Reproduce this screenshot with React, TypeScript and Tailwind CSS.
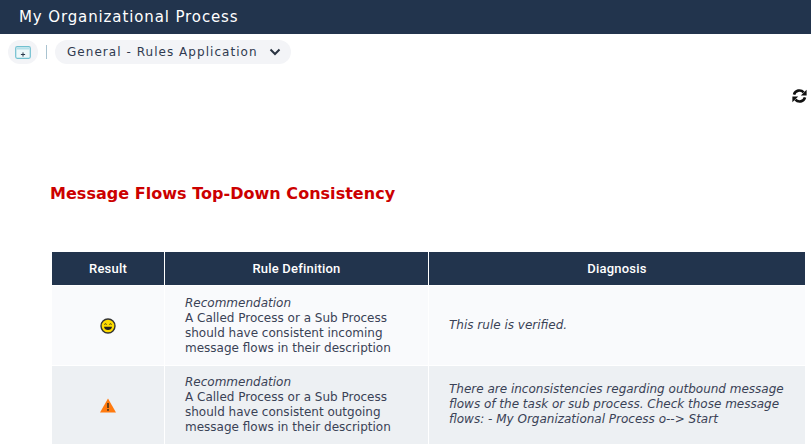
import React from "react";

const F = "font-['DejaVu_Sans',sans-serif]";

function Smile() {
  return (
    <svg width="16" height="16" viewBox="0 0 16 16">
      <circle cx="8" cy="8" r="7" fill="#ffdc00" stroke="#333" strokeWidth="1.4" />
      <path d="M4.4 6.4 Q5.5 5.2 6.6 6.4 M9.4 6.4 Q10.5 5.2 11.6 6.4" fill="none" stroke="#222" strokeWidth="1" />
      <path d="M4 8.8 H12 Q11.4 12 8 12 Q4.6 12 4 8.8 Z" fill="#222" />
    </svg>
  );
}

function Warn() {
  return (
    <svg width="16" height="15" viewBox="0 0 16 15">
      <path d="M8 0.5 L16 14.5 H0 Z" fill="#ff7a0f" />
      <rect x="7.1" y="5" width="1.8" height="5" fill="#5a3a1a" />
      <rect x="7.1" y="11" width="1.8" height="1.8" fill="#5a3a1a" />
    </svg>
  );
}

function Row({ icon, term, rule, diag, bg, h }: { icon: React.ReactNode; term: string; rule: string[]; diag: string[]; bg: string; h: string }) {
  return (
    <>
      <div className={`${bg} ${h} flex items-center justify-center`}>{icon}</div>
      <div className={`${bg} ${h} flex flex-col justify-center pl-5 text-[12px] leading-[15px] text-[#3a4256]`}>
        <i>{term}</i>
        {rule.map((l) => (
          <span key={l} className="whitespace-nowrap">{l}</span>
        ))}
      </div>
      <div className={`${bg} ${h} flex flex-col justify-center pl-5 pb-[1px] text-[12px] leading-[15px] italic text-[#3a4256]`}>
        {diag.map((l) => (
          <span key={l} className="whitespace-nowrap">{l}</span>
        ))}
      </div>
    </>
  );
}

export default function App() {
  return (
    <div className={`${F} w-[811px] h-[448px] overflow-hidden bg-white flex flex-col`}>
      <header className="h-[34px] bg-[#22344d] flex items-center pl-[19px] text-[15px] tracking-[0.88px] text-white">
        My Organizational Process
      </header>
      <div className="h-[36px] flex items-center pl-2">
        <div className="w-[30px] h-[24px] rounded-full bg-[#f3f4f7] flex items-center justify-center">
          <svg width="16" height="13" viewBox="0 0 16 13">
            <rect x="0.7" y="0.7" width="14.6" height="11.6" rx="1.5" fill="#eef8fa" stroke="#72c0d0" strokeWidth="1.2" />
            <rect x="1.5" y="1.5" width="13" height="2" fill="#b5e0e9" />
            <path d="M8 6.4 V10.6 M5.9 8.5 H10.1" stroke="#2b3a4d" strokeWidth="1" />
          </svg>
        </div>
        <div className="w-px h-[14px] bg-[#a9c3d0] ml-[8px]" />
        <div className="ml-[8px] w-[236px] h-[24px] rounded-full bg-[#f3f4f7] flex items-center pl-[12px] text-[12px] tracking-[1.04px] text-[#2f3a4f]">
          <span className="whitespace-nowrap">General - Rules Application</span>
          <svg className="ml-[11px]" width="12" height="8" viewBox="0 0 12 8">
            <path d="M1.5 1.5 L6 6 L10.5 1.5" fill="none" stroke="#2a3442" strokeWidth="2" />
          </svg>
        </div>
      </div>
      <div className="h-[52px] flex justify-end items-start pr-[4px] pt-[18px]">
        <svg width="15" height="16" viewBox="0 0 15 16">
          <path d="M2 6.6 A5.6 5.6 0 0 1 11.6 4.4" fill="none" stroke="#111" strokeWidth="2.6" />
          <path d="M14.6 1.8 V7.6 H8.8 Z" fill="#111" />
          <path d="M13 9.4 A5.6 5.6 0 0 1 3.4 11.6" fill="none" stroke="#111" strokeWidth="2.6" />
          <path d="M0.4 14.2 V8.4 H6.2 Z" fill="#111" />
        </svg>
      </div>
      <h1 className="ml-[50px] mt-[62px] text-[16px] leading-[20px] font-bold text-[#cc0000] whitespace-nowrap tracking-[0.03px]">
        Message Flows Top-Down Consistency
      </h1>
      <div className="ml-[52px] mt-[48px] w-[753px] grid grid-cols-[112px_263px_376px] gap-[1px] bg-white">
        {["Result", "Rule Definition", "Diagnosis"].map((t) => (
          <div key={t} className="h-[33px] bg-[#22344d] flex items-center justify-center text-[13px] font-['Roboto',sans-serif] font-medium text-white tracking-[0.2px]">
            {t}
          </div>
        ))}
        <Row
          icon={<Smile />}
          term="Recommendation"
          rule={["A Called Process or a Sub Process", "should have consistent incoming", "message flows in their description"]}
          diag={["This rule is verified."]}
          bg="bg-[#f9fafc]"
          h="h-[79px]"
        />
        <Row
          icon={<Warn />}
          term="Recommendation"
          rule={["A Called Process or a Sub Process", "should have consistent outgoing", "message flows in their description"]}
          diag={["There are inconsistencies regarding outbound message", "flows of the task or sub process. Check those message", "flows: - My Organizational Process o--> Start"]}
          bg="bg-[#edf0f3]"
          h="h-[78px]"
        />
      </div>
    </div>
  );
}
